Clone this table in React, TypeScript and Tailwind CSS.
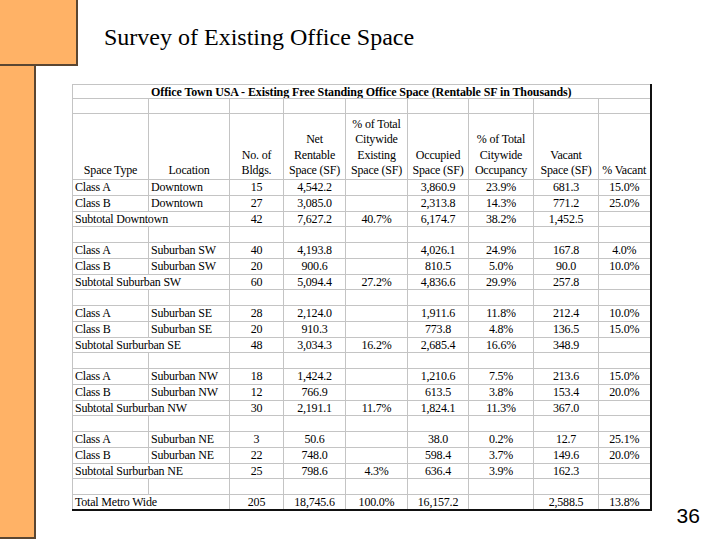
import React from 'react';

type Row =
  | { kind: 'data'; cells: string[] }
  | { kind: 'sub'; label: string; cells: string[] }
  | { kind: 'blank' };

const headers = [
  ['Space Type'],
  ['Location'],
  ['No. of', 'Bldgs.'],
  ['Net', 'Rentable', 'Space (SF)'],
  ['% of Total', 'Citywide', 'Existing', 'Space (SF)'],
  ['Occupied', 'Space (SF)'],
  ['% of Total', 'Citywide', 'Occupancy'],
  ['Vacant', 'Space (SF)'],
  ['% Vacant'],
];

const colWidths = [76, 81, 54, 62, 62, 61, 65, 65, 52];

const rows: Row[] = [
  { kind: 'data', cells: ['Class A', 'Downtown', '15', '4,542.2', '', '3,860.9', '23.9%', '681.3', '15.0%'] },
  { kind: 'data', cells: ['Class B', 'Downtown', '27', '3,085.0', '', '2,313.8', '14.3%', '771.2', '25.0%'] },
  { kind: 'sub', label: 'Subtotal Downtown', cells: ['42', '7,627.2', '40.7%', '6,174.7', '38.2%', '1,452.5', ''] },
  { kind: 'blank' },
  { kind: 'data', cells: ['Class A', 'Suburban SW', '40', '4,193.8', '', '4,026.1', '24.9%', '167.8', '4.0%'] },
  { kind: 'data', cells: ['Class B', 'Suburban SW', '20', '900.6', '', '810.5', '5.0%', '90.0', '10.0%'] },
  { kind: 'sub', label: 'Subtotal Suburban SW', cells: ['60', '5,094.4', '27.2%', '4,836.6', '29.9%', '257.8', ''] },
  { kind: 'blank' },
  { kind: 'data', cells: ['Class A', 'Suburban SE', '28', '2,124.0', '', '1,911.6', '11.8%', '212.4', '10.0%'] },
  { kind: 'data', cells: ['Class B', 'Suburban SE', '20', '910.3', '', '773.8', '4.8%', '136.5', '15.0%'] },
  { kind: 'sub', label: 'Subtotal Surburban SE', cells: ['48', '3,034.3', '16.2%', '2,685.4', '16.6%', '348.9', ''] },
  { kind: 'blank' },
  { kind: 'data', cells: ['Class A', 'Suburban NW', '18', '1,424.2', '', '1,210.6', '7.5%', '213.6', '15.0%'] },
  { kind: 'data', cells: ['Class B', 'Suburban NW', '12', '766.9', '', '613.5', '3.8%', '153.4', '20.0%'] },
  { kind: 'sub', label: 'Subtotal Surburban NW', cells: ['30', '2,191.1', '11.7%', '1,824.1', '11.3%', '367.0', ''] },
  { kind: 'blank' },
  { kind: 'data', cells: ['Class A', 'Suburban NE', '3', '50.6', '', '38.0', '0.2%', '12.7', '25.1%'] },
  { kind: 'data', cells: ['Class B', 'Suburban NE', '22', '748.0', '', '598.4', '3.7%', '149.6', '20.0%'] },
  { kind: 'sub', label: 'Subtotal Surburban NE', cells: ['25', '798.6', '4.3%', '636.4', '3.9%', '162.3', ''] },
  { kind: 'blank' },
  { kind: 'sub', label: 'Total Metro Wide', cells: ['205', '18,745.6', '100.0%', '16,157.2', '', '2,588.5', '13.8%'] },
];

const cell = 'border border-[#c4c4c4] p-0 leading-none whitespace-nowrap overflow-hidden';

function SurveyTable() {
  return (
    <table className="table-fixed border-collapse border-l border-t border-r-2 border-b-2 border-l-[#111] border-t-[#111] border-r-[#111] border-b-[#111] text-[12px] tracking-[-0.2px]">
      <colgroup>
        {colWidths.map((w, i) => (
          <col key={i} style={{ width: w }} />
        ))}
      </colgroup>
      <tbody>
        <tr className="h-[14px]">
          <td colSpan={9} className={`${cell} text-center font-bold tracking-[-0.1px]`}>
            Office Town USA - Existing Free Standing Office Space (Rentable SF in Thousands)
          </td>
        </tr>
        <tr className="h-[15px]">
          {colWidths.map((_, i) => (
            <td key={i} className={cell} />
          ))}
        </tr>
        <tr className="h-[60px]">
          {headers.map((lines, i) => (
            <td key={i} className={`${cell} text-center align-bottom pb-[3px]`}>
              {lines.map((l) => (
                <div key={l} className="h-[15.5px] flex items-end justify-center">
                  {l}
                </div>
              ))}
            </td>
          ))}
        </tr>
        {rows.map((r, ri) => {
          if (r.kind === 'blank') {
            return (
              <tr key={ri} className="h-[15.75px]">
                {colWidths.map((_, i) => (
                  <td key={i} className={cell} />
                ))}
              </tr>
            );
          }
          if (r.kind === 'sub') {
            return (
              <tr key={ri} className="h-[15.75px]">
                <td colSpan={2} className={`${cell} text-left pl-[2px]`}>
                  {r.label}
                </td>
                {r.cells.map((c, i) => (
                  <td key={i} className={`${cell} text-center`}>
                    {c}
                  </td>
                ))}
              </tr>
            );
          }
          return (
            <tr key={ri} className="h-[15.75px]">
              {r.cells.map((c, i) => (
                <td key={i} className={`${cell} ${i < 2 ? 'text-left pl-[2px]' : 'text-center'}`}>
                  {c}
                </td>
              ))}
            </tr>
          );
        })}
      </tbody>
    </table>
  );
}

export default function App() {
  return (
    <div className="w-[720px] h-[540px] bg-white text-black overflow-hidden font-['Liberation_Serif',serif]">
      <div className="flex h-[66px]">
        <div className="w-[78px] h-[66px] bg-[#ffb266] border-r-2 border-b-2 border-[#5a4632]" />
        <h1 className="ml-[26px] mt-[25px] text-[24px] leading-none font-normal">
          Survey of Existing Office Space
        </h1>
      </div>
      <div className="flex">
        <div className="w-[36px] h-[473px] bg-[#ffb266] border-r-2 border-b-2 border-[#5a4632]" />
        <div className="ml-[36px] mt-[18px]">
          <SurveyTable />
        </div>
        <div className="ml-[25px] mt-[439px] text-[21px] leading-none font-['Liberation_Sans',sans-serif]">
          36
        </div>
      </div>
    </div>
  );
}
